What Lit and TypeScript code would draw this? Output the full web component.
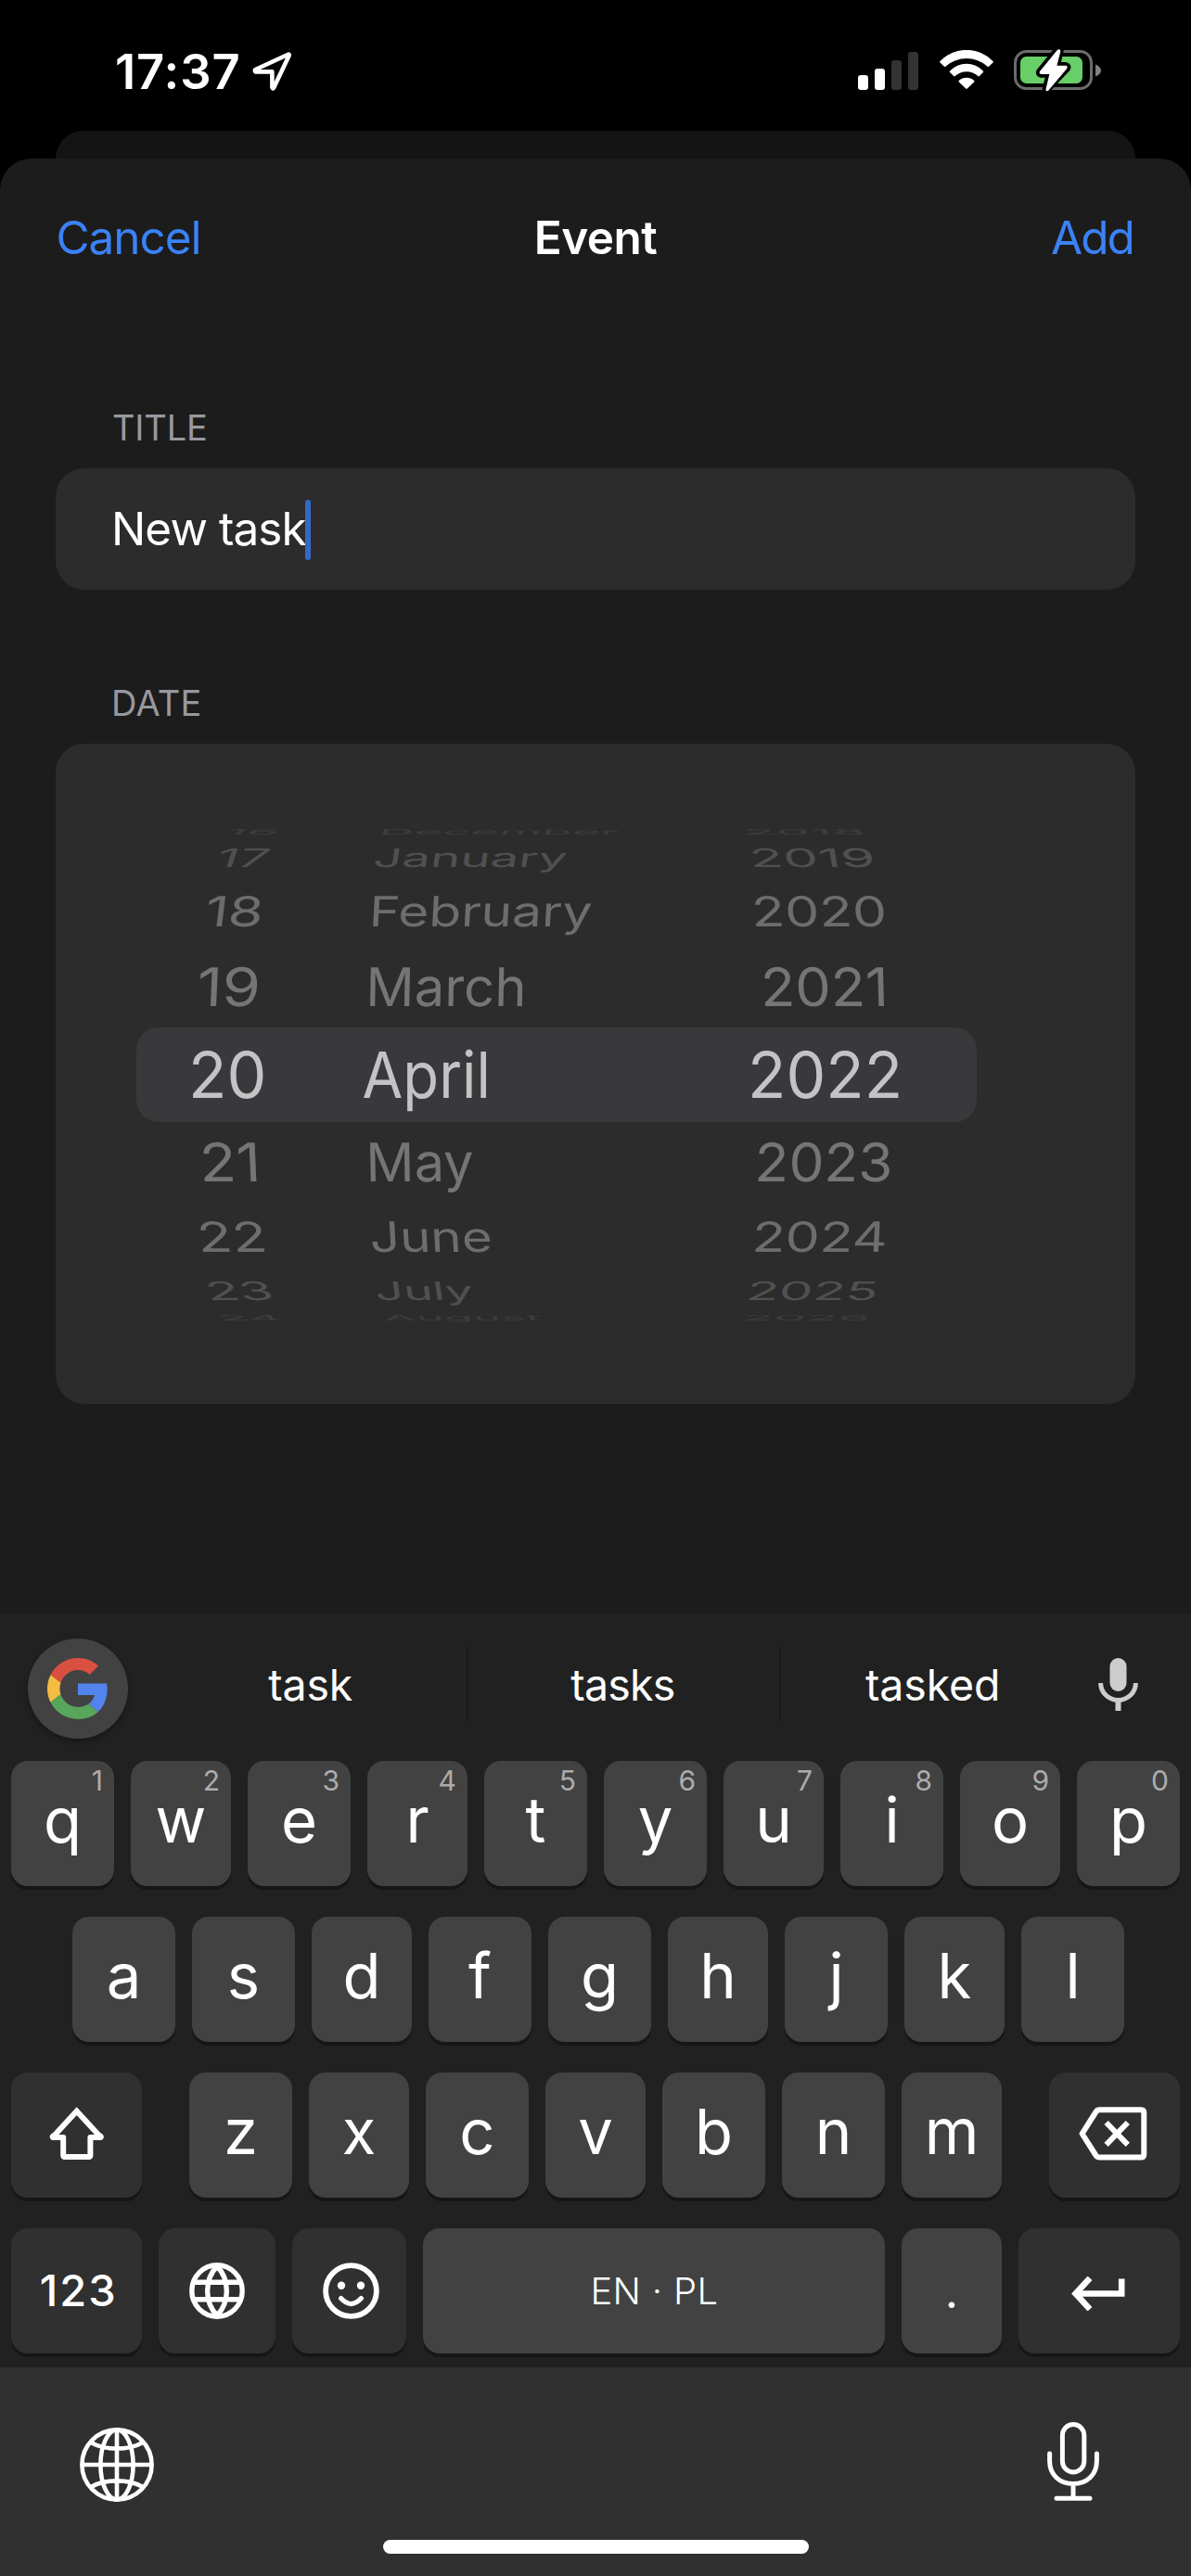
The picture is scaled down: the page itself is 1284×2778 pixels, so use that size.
import { LitElement, html, css, svg } from "lit";
import { customElement, property } from "lit/decorators.js";

const FAMILY = 'Inter, "Liberation Sans", sans-serif';
const pen = document.createElement("canvas").getContext("2d")!;

/** Ink box of a string, measured from its origin. */
function ink(text: string, size: number, weight: number) {
  pen.font = `${weight} ${size}px ${FAMILY}`;
  const m = pen.measureText(text);
  return {
    left: -m.actualBoundingBoxLeft,
    right: m.actualBoundingBoxRight,
    advance: m.width,
  };
}

/** A text run whose box is its ink, tracked so that it fills the given width. */
@customElement("tracked-text")
class TrackedText extends LitElement {
  @property() text = "";
  @property({ type: Number }) size = 50;
  @property({ type: Number }) weight = 400;
  @property({ type: Number }) fill = 0;

  static styles = css`
    :host { display: block; }
    .run { display: block; white-space: pre; line-height: 1.2; }
  `;

  render() {
    const m = ink(this.text, this.size, this.weight);
    const gaps = this.text.length - 1;
    const spacing = gaps > 0 && this.fill ? (this.fill - (m.right - m.left)) / gaps : 0;
    return html`<span
      class="run"
      style="font-size:${this.size}px;font-weight:${this.weight};letter-spacing:${spacing}px;margin-left:${-m.left}px;margin-right:${m.right - m.advance - spacing}px"
      >${this.text}</span>`;
  }
}

type Cell = [text: string, inset: number, width: number];
interface WheelRow {
  height: number;
  squash: number;
  color: string;
  lean: [number, number, number];
  cells: [Cell, Cell, Cell];
}

const ROWS: WheelRow[] = [
  { height: 16, squash: 0.12, color: "#3d3d3e", lean: [-42, -20, 20], cells: [["16", 99, 52], ["December", 26, 254], ["2018", 18, 125]] },
  { height: 41, squash: 0.4, color: "#505052", lean: [-18, -8, 9], cells: [["17", 90, 51], ["January", 18, 205], ["2019", 25, 128]] },
  { height: 75, squash: 0.65, color: "#6d6d6f", lean: [-7, -3, 3], cells: [["18", 77, 57], ["February", 16, 234], ["2020", 27.5, 138.5]] },
  { height: 87, squash: 0.83, color: "#757577", lean: [-2.5, -1, 1.5], cells: [["19", 68.5, 62], ["March", 12.5, 164], ["2021", 37.5, 128]] },
  { height: 102, squash: 1, color: "#c3c3c5", lean: [0, 0, 0], cells: [["20", 61, 76], ["April", 4.5, 133], ["2022", 24, 158]] },
  { height: 87, squash: 0.83, color: "#757577", lean: [2.5, 1, -1.5], cells: [["21", 72.5, 56], ["May", 12.5, 109.5], ["2023", 31, 141.5]] },
  { height: 75, squash: 0.65, color: "#6d6d6f", lean: [7, 3, -3], cells: [["22", 70, 67], ["June", 14, 127], ["2024", 28, 139]] },
  { height: 41, squash: 0.4, color: "#505052", lean: [18, 8, -9], cells: [["23", 79, 65], ["July", 19.5, 102], ["2025", 22, 134.5]] },
  { height: 16, squash: 0.12, color: "#3d3d3e", lean: [42, 20, -20], cells: [["24", 92, 61], ["August", 27, 169], ["2026", 17, 131]] },
];

@customElement("date-wheel")
class DateWheel extends LitElement {
  static styles = css`
    :host { display: block; width: 906px; }
    .row { display: grid; grid-template-columns: 240px 400px 1fr; border-radius: 24px; }
    .picked { background: #39393b; }
    .label {
      display: inline-block;
      font-size: 69px;
      white-space: pre;
      transform-origin: 0 50%;
      vertical-align: top;
    }
  `;

  private cell([text, inset, width]: Cell, row: WheelRow, col: number) {
    const m = ink(text, 69, 400);
    const sx = width / (m.right - m.left);
    return html`<div>
      <span
        class="label"
        style="transform:translate(${inset - m.left * sx}px,0) skewX(${row.lean[col]}deg) scale(${sx},${row.squash})"
        >${text}</span>
    </div>`;
  }

  render() {
    return ROWS.map(
      (row) => html`<div
        class="row ${row.squash === 1 ? "picked" : ""}"
        style="height:${row.height}px;line-height:${row.height}px;color:${row.color}"
      >${row.cells.map((c, i) => this.cell(c, row, i))}</div>`
    );
  }
}

const shiftIcon = svg`<svg class="shift" width="60" height="58" viewBox="0 0 60 58" fill="none" stroke="#fff" stroke-width="6" stroke-linejoin="round">
  <path stroke-linejoin="miter" d="M5.5 31 29.7 4.6 53.9 31"/>
  <path d="M5.5 30.5 3.6 32.2Q3.5 33 4.6 33H15.2V52.2Q15.2 54 17 54H42.6Q44.4 54 44.4 52.2V33H55Q56.2 33 55.8 32.2L53.9 30.5"/></svg>`;

const deleteIcon = svg`<svg class="delete" width="74" height="58" viewBox="0 0 74 58" fill="none" stroke="#fff" stroke-width="6" stroke-linejoin="round">
  <path d="M3.6 29 18.6 5.3Q20 3.3 22.4 3.3H67Q70.3 3.3 70.3 6.6V51.3Q70.3 54.6 67 54.6H22.4Q20 54.6 18.6 52.6Z"/>
  <path d="M29.6 17 52.8 40.8M52.8 17 29.6 40.8"/></svg>`;

const globeIcon = svg`<svg width="60" height="61" viewBox="0 0 60 61" fill="none" stroke="#fff" stroke-width="5.4">
  <ellipse cx="30" cy="30.5" rx="27.2" ry="27.7"/>
  <path d="M30 4C16.2 18 16.2 43 30 57M30 4C43.8 18 43.8 43 30 57M5 21.2H55M5 39.8H55"/></svg>`;

const smileIcon = svg`<svg class="smile" width="61" height="61" viewBox="0 0 61 61" fill="none" stroke="#fff" stroke-width="5.8">
  <circle cx="30.5" cy="30.5" r="27.4"/>
  <g fill="#fff" stroke="none"><circle cx="20" cy="24.8" r="4.2"/><circle cx="41" cy="24.8" r="4.2"/></g>
  <path stroke-width="5.2" stroke-linecap="round" d="M19.6 38.6Q30.5 50.5 41.4 38.6"/></svg>`;

const returnIcon = svg`<svg class="return" width="58" height="37" viewBox="0 0 58 37" fill="none" stroke="#fff" stroke-width="6.6">
  <path d="M20 1.8 4.6 18.5 20 35.2M4.8 18.5H54.2V2.5"/></svg>`;

interface Key {
  width: number;
  label?: string;
  hint?: string;
  icon?: unknown;
  kind?: string;
  fill?: number;
}

const letters = (chars: string, widths: number[], hints = ""): Key[] =>
  [...chars].map((label, i) => ({ label, width: widths[i], hint: hints[i] }));

const KEYS: Key[][] = [
  letters("qwertyuiop", [111, 108, 111, 108, 111, 111, 108, 111, 108, 111], "1234567890"),
  letters("asdfghjkl", [111, 111, 108, 111, 111, 108, 111, 108, 111]),
  [
    { width: 141, icon: shiftIcon, kind: "dark" },
    ...letters("zxcvbnm", [111, 108, 111, 108, 111, 111, 108]),
    { width: 141, icon: deleteIcon, kind: "dark" },
  ],
  [
    { width: 141, label: "123", kind: "dark digits", fill: 77.5 },
    { width: 126, icon: globeIcon, kind: "dark" },
    { width: 123, icon: smileIcon, kind: "dark" },
    { width: 498, label: "EN · PL", kind: "space", fill: 133 },
    { width: 108, label: ".", kind: "dot" },
    { width: 174, icon: returnIcon, kind: "dark" },
  ],
];

@customElement("soft-keyboard")
class SoftKeyboard extends LitElement {
  static styles = css`
    :host { display: block; background: #212121; height: 813px; }
    .strip { display: grid; grid-template-columns: 138px 365px 2px 335px 2px 337px 1fr; height: 156px; align-items: center; }
    .google {
      width: 108px; height: 108px; margin: 6px 0 0 30px; border-radius: 50%;
      background: #424242; box-shadow: 0 3px 6px rgba(0, 0, 0, 0.3);
      display: flex; align-items: center; justify-content: center;
    }
    .word { justify-self: center; }
    .first { padding-left: 28px; }
    .second { padding-right: 3px; }
    .last { padding-right: 13px; }
    .rule { width: 2px; height: 81px; background: #1a1a1a; margin-bottom: 3px; }
    .voice { display: block; margin-left: 5px; margin-bottom: 3px; }
    .rows { display: flex; flex-direction: column; gap: 33px; padding: 3px 12px 0; }
    .row { display: flex; gap: 18px; justify-content: space-between; }
    .home-row { padding: 0 60px 0 66px; }
    .mid { display: flex; gap: 18px; }
    .key {
      position: relative; box-sizing: border-box; height: 135px; border-radius: 18px;
      background: #424242; box-shadow: 0 4px 0 #161616;
      display: flex; align-items: center; justify-content: center;
      padding-bottom: 8px; font-size: 67px; line-height: 80px; color: #fff;
    }
    .key.dark { background: #303030; }
    .key.icon, .key.space, .key.digits { padding-bottom: 0; }
    .key.digits, .key.space { padding-left: 2px; }
    .key.dot { font-size: 50px; padding-bottom: 0; line-height: 60px; }
    .hint { position: absolute; right: 12px; top: 3px; font-size: 30px; line-height: 36px; color: #acacac; }
    .shift { margin-bottom: 4px; }
    .delete { margin: 0 4px 4px 0; }
    .smile { margin-left: 3px; }
    .return { margin: 6px 2px 0 0; }
  `;

  private key(k: Key) {
    const content = k.icon
      ? k.icon
      : k.fill
        ? html`<tracked-text text=${k.label!} size=${k.kind === "space" ? 40 : 47} weight=${k.kind === "space" ? 300 : 500} fill=${k.fill}></tracked-text>`
        : k.label;
    return html`<div class="key ${k.kind ?? ""} ${k.icon ? "icon" : ""}" style="width:${k.width}px">
      ${k.hint ? html`<span class="hint">${k.hint}</span>` : null}${content}
    </div>`;
  }

  private row(keys: Key[], index: number) {
    if (index !== 2) {
      return html`<div class="row ${index === 1 ? "home-row" : ""}">${keys.map((k) => this.key(k))}</div>`;
    }
    return html`<div class="row">
      ${this.key(keys[0])}
      <div class="mid">${keys.slice(1, -1).map((k) => this.key(k))}</div>
      ${this.key(keys[keys.length - 1])}
    </div>`;
  }

  render() {
    return html`
      <div class="strip">
        <div class="google">
          <svg width="66" height="66" viewBox="0 0 48 48">
            <path fill="#d95040" d="M24 9.5c3.54 0 6.71 1.22 9.21 3.6l6.85-6.85C35.9 2.38 30.47 0 24 0 14.62 0 6.51 5.38 2.56 13.22l7.98 6.19C12.43 13.72 17.74 9.5 24 9.5z"/>
            <path fill="#5383ec" d="M46.98 24.55c0-1.57-.15-3.09-.38-4.55H24v9.02h12.94c-.58 2.96-2.26 5.48-4.78 7.18l7.73 6c4.51-4.18 7.09-10.36 7.09-17.65z"/>
            <path fill="#f2bd42" d="M10.53 28.59c-.48-1.45-.76-2.99-.76-4.59s.27-3.14.76-4.59l-7.98-6.19C.92 16.46 0 20.12 0 24c0 3.88.92 7.54 2.56 10.78l7.97-6.19z"/>
            <path fill="#58a55c" d="M24 48c6.48 0 11.93-2.13 15.89-5.81l-7.73-6c-2.15 1.45-4.92 2.3-8.16 2.3-6.26 0-11.57-4.22-13.47-9.91l-7.98 6.19C6.51 42.62 14.62 48 24 48z"/>
          </svg>
        </div>
        <tracked-text class="word first" text="task" size="46.5" fill="90.5"></tracked-text>
        <div class="rule"></div>
        <tracked-text class="word second" text="tasks" size="46.5" fill="111.5"></tracked-text>
        <div class="rule"></div>
        <tracked-text class="word last" text="tasked" size="46.5" fill="142"></tracked-text>
        <svg class="voice" width="43" height="57" viewBox="0 0 43 57" fill="#cdcdcd">
          <rect x="12.5" width="18" height="36" rx="9"/>
          <path fill="none" stroke="#cdcdcd" stroke-width="5" d="M2.6 27A18.9 18.4 0 0 0 40.4 27"/>
          <rect x="18.5" y="46" width="6" height="11"/>
        </svg>
      </div>
      <div class="rows">${KEYS.map((r, i) => this.row(r, i))}</div>
    `;
  }
}

@customElement("app-root")
class AppRoot extends LitElement {
  static styles = css`
    :host {
      display: block; width: 1284px; height: 2778px; overflow: hidden; background: #000; color: #fff;
      font-family: Inter, "Liberation Sans", sans-serif;
    }
    .screen { display: flex; flex-direction: column; height: 2778px; }
    .status { height: 141px; box-sizing: border-box; padding: 14px 97px 0 126px; display: flex; align-items: center; }
    .status svg { display: block; }
    .arrow { margin-left: 14.5px; margin-top: -1px; }
    .signal { margin-left: auto; margin-top: -2px; }
    .wifi { margin-left: 22.5px; margin-top: -5px; }
    .battery { margin-left: 22.5px; margin-top: -4px; }
    .behind { height: 30px; margin: 0 60px; background: #141414; border-radius: 31px 31px 0 0; }
    .sheet {
      height: 1569px; background: #1c1c1c; border-radius: 34px 34px 0 0;
      box-sizing: border-box; padding: 0 60px;
    }
    .nav { display: grid; grid-template-columns: 1fr auto 1fr; align-items: center; height: 170px; padding: 1px 3.5px 0 2.5px; box-sizing: border-box; }
    .blue { color: #3a82f7; }
    .heading { margin-left: 4px; }
    .right { justify-self: end; }
    .caption { color: #98989f; height: 46px; padding-left: 62px; display: flex; align-items: center; }
    .title { margin-top: 98px; }
    .date { margin-top: 100px; padding-left: 63px; }
    .card { background: #2c2c2c; border-radius: 31px; box-sizing: border-box; }
    .input { height: 131px; margin-top: 20px; padding: 1px 0 0 64px; display: flex; align-items: center; }
    .caret { width: 6px; height: 65px; border-radius: 3px; background: #3369c6; margin-left: -1.5px; }
    .picker { height: 712px; margin-top: 20px; padding: 87px 0 0 87px; }
    .dock { flex: 1; background: #303030; box-sizing: border-box; padding: 59px 99px 24px 86px; display: flex; flex-direction: column; justify-content: space-between; }
    .tools { display: flex; justify-content: space-between; }
    .tools svg { display: block; }
    .world { margin-top: 6px; }
    .home { width: 459px; height: 15px; border-radius: 8px; background: #fff; margin-left: 327px; }
  `;

  render() {
    return html`
      <div class="screen">
        <div class="status">
          <tracked-text text="17:37" size="52.5" weight="600" fill="131.5"></tracked-text>
          <svg class="arrow" width="43" height="43" viewBox="0 0 43 43" fill="none" stroke="#fff" stroke-width="4.6" stroke-linejoin="round">
            <path d="M39.6 2.8Q39.2 2.4 38 3L3.4 19Q2.2 20.2 3.6 21.4H21.4V38.4Q22.2 40.2 23.2 38.6L39.6 4Z"/>
          </svg>
          <svg class="signal" width="65" height="41" viewBox="0 0 65 41">
            <g fill="#fff"><rect y="25" width="11" height="16" rx="3.2"/><rect x="18" y="18" width="11" height="23" rx="3.2"/></g>
            <g fill="#333"><rect x="36" y="9" width="11" height="32" rx="3.2"/><rect x="54" width="11" height="41" rx="3.2"/></g>
          </svg>
          <svg class="wifi" width="58" height="42" viewBox="0 0 58 42" fill="#fff">
            <path d="M.5 12A39.5 39.5 0 0 1 57.5 12Q58.2 12.8 57.5 13.6L53 17.8Q52.3 18.5 51.4 17.6A33.8 33.8 0 0 0 6.6 17.6Q5.7 18.5 5 17.8L.5 13.6Q-.2 12.8 .5 12Z"/>
            <path d="M11.1 22.5A24.5 24.5 0 0 1 46.9 22.5Q47.6 23.4 46.9 24.1L42.9 28.1Q42.2 28.8 41.4 28A18.6 18.6 0 0 0 16.6 28Q15.8 28.8 15.1 28.1L11.1 24.1Q10.4 23.4 11.1 22.5Z"/>
            <path d="M20.9 32.8A12 12 0 0 1 37.1 32.8Q37.9 33.6 37.1 34.4L29.8 41.4Q29 42.2 28.2 41.4L20.9 34.4Q20.1 33.6 20.9 32.8Z"/>
          </svg>
          <svg class="battery" width="94" height="46" viewBox="0 0 94 46">
            <rect x="1.5" y="2.5" width="82" height="40" rx="12" fill="none" stroke="#6b6b6b" stroke-width="3"/>
            <path fill="#808080" d="M88 16.5Q94 19 94 23T88 29.5Z"/>
            <rect x="7" y="8" width="67" height="29" rx="6.5" fill="#68ce67"/>
            <path fill="#000" stroke="#000" stroke-width="9" stroke-linejoin="round" d="M47.4 1.6 28.6 24.6Q28 26 29.4 26.2H39.4L35.2 43 56.6 20.4Q57.4 18.8 56 18.6H45.4L49 2Z"/>
            <path fill="#fff" stroke="#fff" stroke-width="1.6" stroke-linejoin="round" d="M47.4 1.6 28.6 24.6Q28 26 29.4 26.2H39.4L35.2 43.6Q35.6 45 36.8 44L56.6 20.4Q57.4 18.8 56 18.6H45.4L49.6 2Q49 .4 47.4 1.6Z"/>
          </svg>
        </div>
        <div class="behind"></div>
        <main class="sheet">
          <div class="nav">
            <tracked-text class="blue" text="Cancel" size="49.5" fill="152"></tracked-text>
            <tracked-text class="heading" text="Event" size="49.5" weight="600" fill="129.5"></tracked-text>
            <tracked-text class="blue right" text="Add" size="49.5" fill="86.5"></tracked-text>
          </div>
          <div class="caption title"><tracked-text text="TITLE" size="38" fill="100"></tracked-text></div>
          <div class="card input">
            <tracked-text text="New task" size="49.5" fill="206.5"></tracked-text>
            <div class="caret"></div>
          </div>
          <div class="caption date"><tracked-text text="DATE" size="38" fill="92.5"></tracked-text></div>
          <div class="card picker"><date-wheel></date-wheel></div>
        </main>
        <soft-keyboard></soft-keyboard>
        <div class="dock">
          <div class="tools">
            <svg class="world" width="80" height="80" viewBox="0 0 80 80" fill="none" stroke="#fff" stroke-width="4.6">
              <circle cx="40" cy="40" r="37.6"/>
              <ellipse cx="40" cy="40" rx="17.6" ry="37.6"/>
              <path d="M40 2V78M2 40H78M13 16.4Q24 22.6 40 22.6T67 16.4M13 63.6Q24 57.4 40 57.4T67 63.6"/>
            </svg>
            <svg width="56" height="86" viewBox="0 0 56 86" fill="none" stroke="#fff" stroke-width="5" stroke-linecap="round">
              <rect x="16.4" y="2.5" width="23.4" height="51.5" rx="11.7"/>
              <path d="M2.6 34V42C2.6 56.5 13 66.6 28 66.6S53.4 56.5 53.4 42V34M28 67V81M10 82.2H46"/>
            </svg>
          </div>
          <div class="home"></div>
        </div>
      </div>
    `;
  }
}
